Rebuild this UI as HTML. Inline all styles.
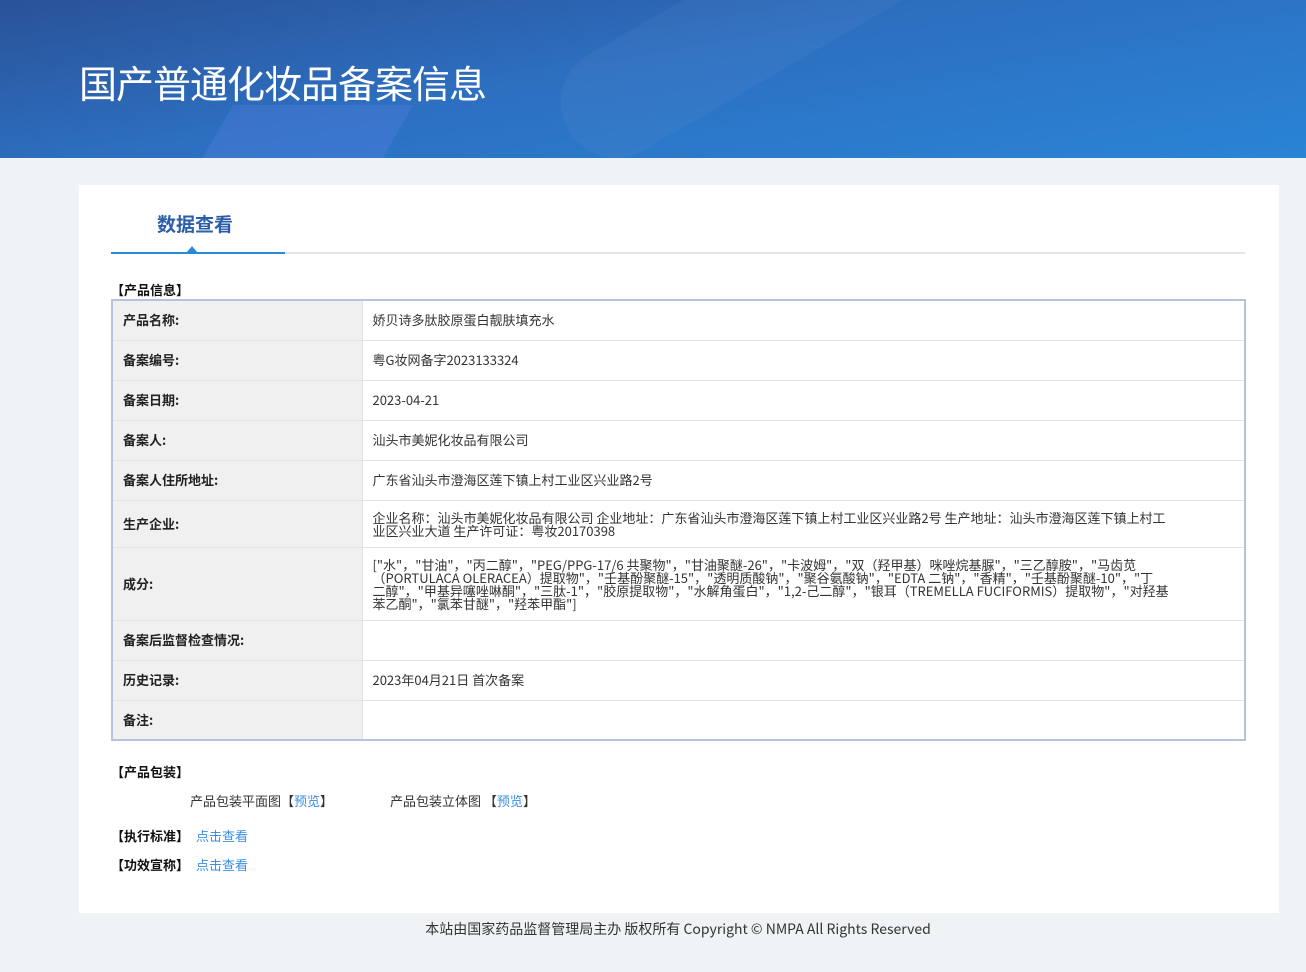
<!DOCTYPE html>
<html><head><meta charset="utf-8"><style>
*{margin:0;padding:0;box-sizing:border-box}
body{width:1306px;height:972px;background:#eff3f6;font-family:"Noto Sans CJK SC","Liberation Sans",sans-serif;font-size:13px;line-height:18px;color:#333;position:relative;overflow:hidden}
.hdr{position:absolute;left:0;top:0;width:1306px;height:158px;background:linear-gradient(170deg,#2a5298 0%,#2d6fc0 45%,#2a84d6 100%);overflow:hidden}
.hdr .s1{position:absolute;left:540px;top:-30px;width:420px;height:110px;border-radius:55px;background:rgba(255,255,255,0.035);transform:rotate(-30deg)}
.hdr .s2{position:absolute;left:210px;top:105px;width:180px;height:80px;background:rgba(90,130,230,0.3);transform:skewX(-30deg)}
.hdr h1{position:absolute;left:79px;top:56px;font-size:38px;font-weight:normal;color:#fff;letter-spacing:-1px;line-height:52px;font-family:"Noto Sans CJK SC",sans-serif}
.card{position:absolute;left:79px;top:185px;width:1200px;height:728px;background:#fff}
.tab{position:absolute;left:78px;top:25px;font-size:19px;line-height:28px;font-weight:bold;color:#2b5ea8}
.line{position:absolute;left:32px;top:67px;width:1134px;height:2px;background:#e6e6e6}
.line b{position:absolute;left:0;top:0;width:174px;height:2px;background:#2b8ad8}
.tri{position:absolute;left:108px;top:61px;width:0;height:0;border-left:5px solid transparent;border-right:5px solid transparent;border-bottom:6px solid #2b8ad8}
.sec{position:absolute;left:32px;font-weight:bold;color:#111;font-size:13px}
table{position:absolute;left:32px;top:114px;width:1135px;border-collapse:collapse;border:2px solid #b4c4dc}
td{border:1px solid #e2e2e2;padding:0 10px;height:40px;vertical-align:middle}
td.l{width:250px;background:#f0f0f0;font-weight:bold;color:#222}
td.v{line-height:13px}
a{color:#3a8ee6;text-decoration:none}
.foot{position:absolute;top:920px;left:0;width:1356px;text-align:center;font-size:14px;color:#333}
</style></head><body>
<div class="hdr"><div class="s1"></div><div class="s2"></div><h1>国产普通化妆品备案信息</h1></div>
<div class="card">
<div class="tab">数据查看</div>
<div class="line"><b></b></div><div class="tri"></div>
<div class="sec" style="top:96px">【产品信息】</div>
<table>
<tr><td class="l">产品名称:</td><td>娇贝诗多肽胶原蛋白靓肤填充水</td></tr>
<tr><td class="l">备案编号:</td><td>粤G妆网备字2023133324</td></tr>
<tr><td class="l">备案日期:</td><td>2023-04-21</td></tr>
<tr><td class="l">备案人:</td><td>汕头市美妮化妆品有限公司</td></tr>
<tr><td class="l">备案人住所地址:</td><td>广东省汕头市澄海区莲下镇上村工业区兴业路2号</td></tr>
<tr><td class="l" style="height:47px">生产企业:</td><td class="v">企业名称：汕头市美妮化妆品有限公司 企业地址：广东省汕头市澄海区莲下镇上村工业区兴业路2号 生产地址：汕头市澄海区莲下镇上村工<br>业区兴业大道 生产许可证：粤妆20170398</td></tr>
<tr><td class="l" style="height:73px">成分:</td><td class="v">["水"，"甘油"，"丙二醇"，"PEG/PPG-17/6 共聚物"，"甘油聚醚-26"，"卡波姆"，"双（羟甲基）咪唑烷基脲"，"三乙醇胺"，"马齿苋<br>（PORTULACA OLERACEA）提取物"，"壬基酚聚醚-15"，"透明质酸钠"，"聚谷氨酸钠"，"EDTA 二钠"，"香精"，"壬基酚聚醚-10"，"丁<br>二醇"，"甲基异噻唑啉酮"，"三肽-1"，"胶原提取物"，"水解角蛋白"，"1,2-己二醇"，"银耳（TREMELLA FUCIFORMIS）提取物"，"对羟基<br>苯乙酮"，"氯苯甘醚"，"羟苯甲酯"]</td></tr>
<tr><td class="l">备案后监督检查情况:</td><td></td></tr>
<tr><td class="l">历史记录:</td><td>2023年04月21日 首次备案</td></tr>
<tr><td class="l">备注:</td><td></td></tr>
</table>
<div class="sec" style="top:578px">【产品包装】</div>
<div style="position:absolute;left:111px;top:607px">产品包装平面图【<a>预览</a>】</div>
<div style="position:absolute;left:311px;top:607px">产品包装立体图 【<a>预览</a>】</div>
<div class="sec" style="top:642px">【执行标准】 <a style="font-weight:normal;margin-left:4px">点击查看</a></div>
<div class="sec" style="top:671px">【功效宣称】 <a style="font-weight:normal;margin-left:4px">点击查看</a></div>
</div>
<div class="foot">本站由国家药品监督管理局主办 版权所有 Copyright © NMPA All Rights Reserved</div>
</body></html>
